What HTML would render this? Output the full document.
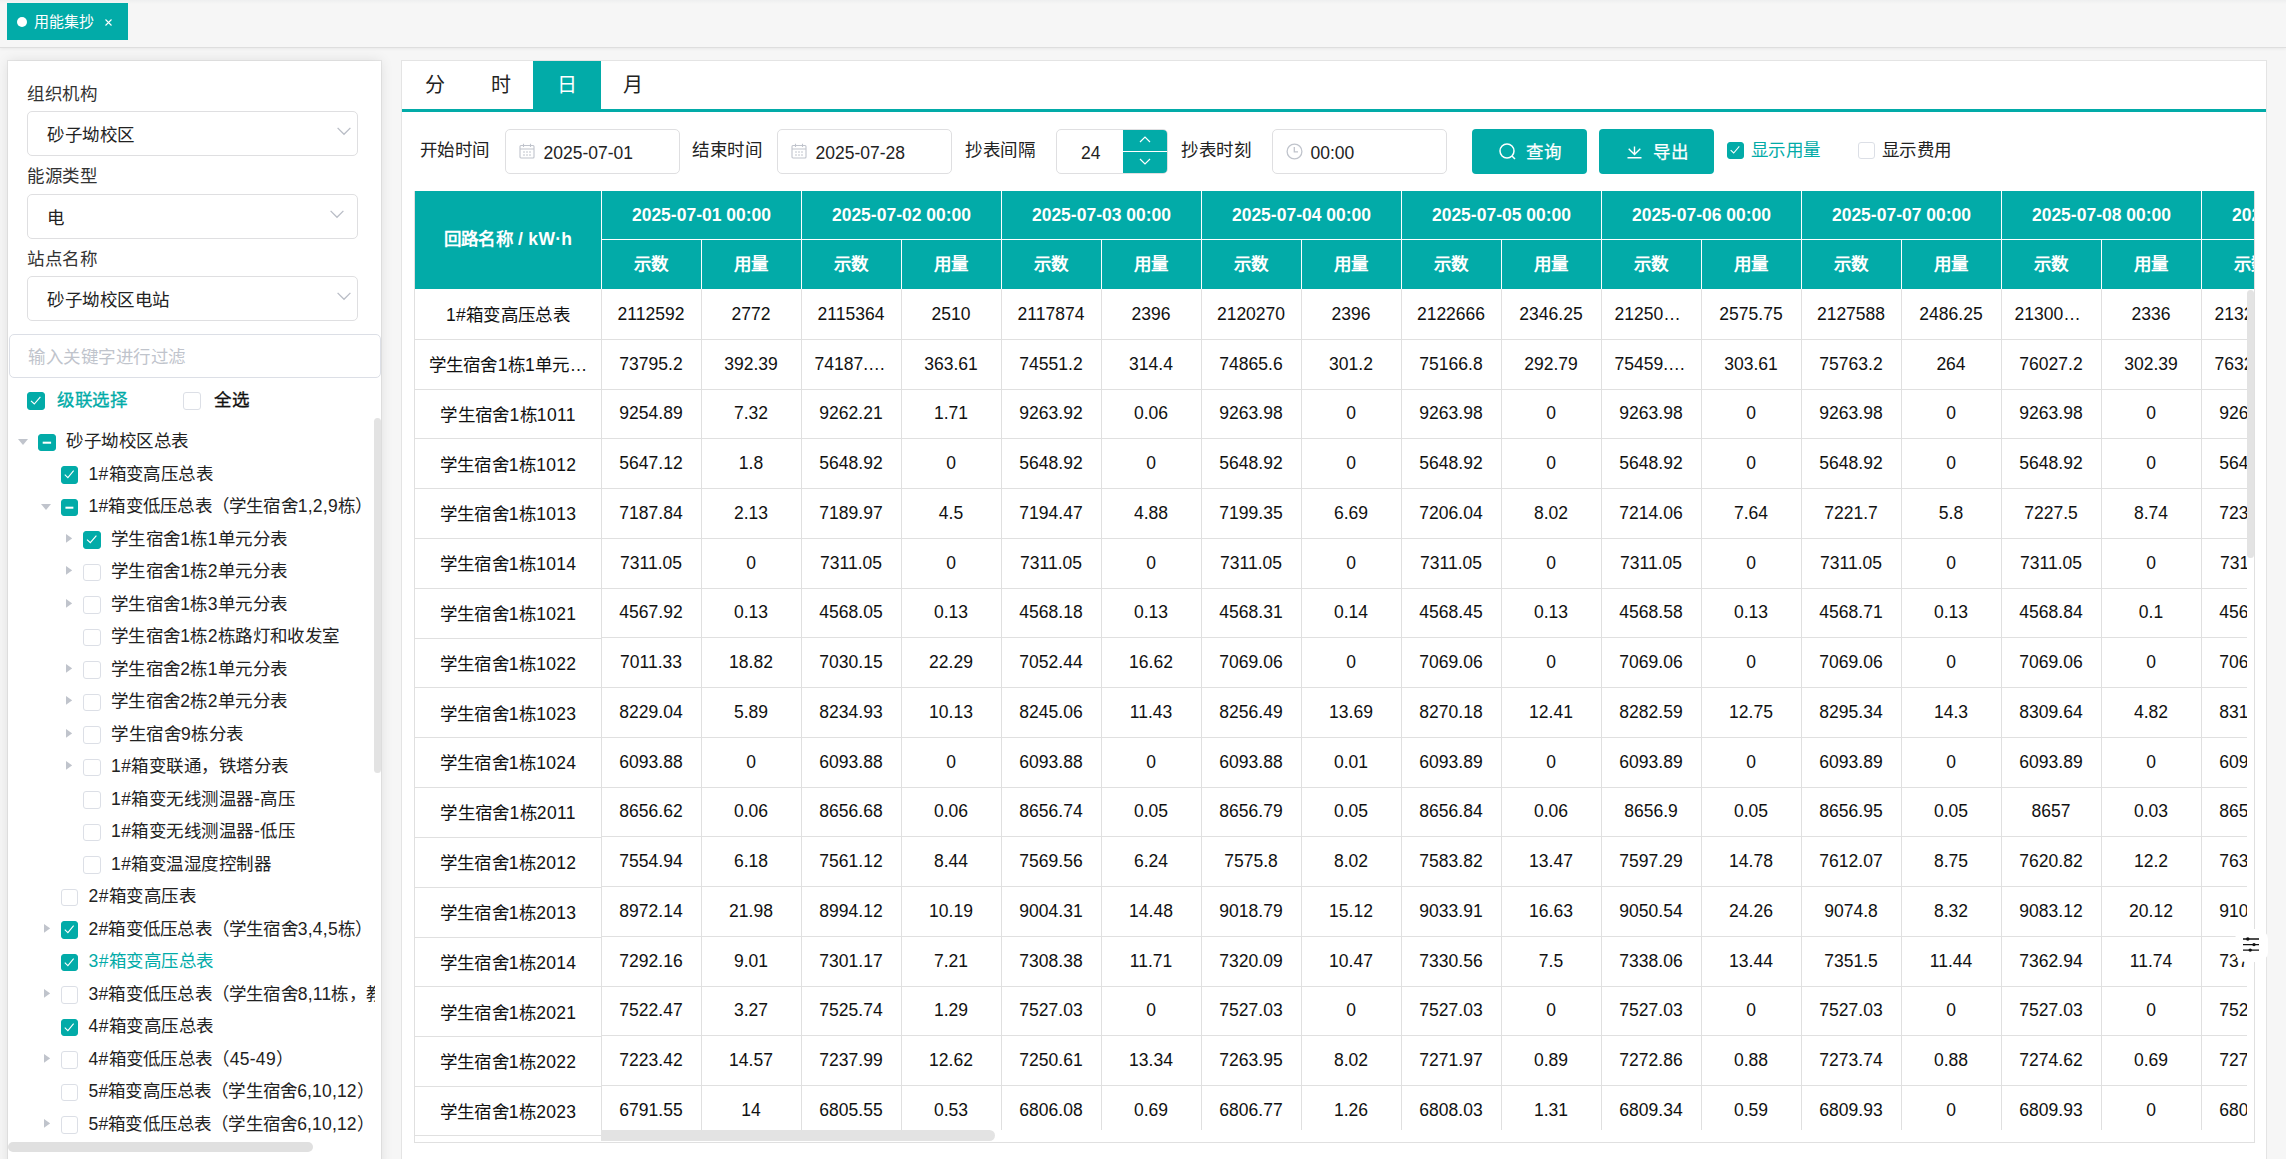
<!DOCTYPE html>
<html lang="zh-CN"><head><meta charset="utf-8"><title>用能集抄</title>
<style>
*{box-sizing:border-box;margin:0;padding:0}
html,body{width:2286px;height:1159px;overflow:hidden;background:#f6f6f6}
body{font-family:"Liberation Sans",sans-serif;font-size:17.5px;color:#222;position:relative}
.abs{position:absolute}
.t{position:absolute;white-space:nowrap;line-height:1;transform:translateY(-50%);margin-top:1.5px;letter-spacing:.5px}
.n{letter-spacing:0}
.cb{position:absolute;border:1px solid #dcdfe6;border-radius:3px;background:#fff;display:block}
.cb.on{background:#02aba8;border-color:#02aba8}
.cb svg{position:absolute;left:-1px;top:-1px;display:block}
/* top bar */
#topbar{left:0;top:0;width:2286px;height:48px;background:linear-gradient(#eeeff0 0,#f6f6f6 4px,#f6f6f6 100%);border-bottom:1px solid #dedede;box-shadow:0 1px 3px rgba(0,0,0,.06)}
#tag{left:7px;top:3px;width:121px;height:37px;background:#02aba8;color:#fff}
/* left panel */
#left{left:8px;top:61px;width:373px;height:1110px;background:#fff;box-shadow:0 0 0 1px rgba(0,0,0,.055),0 0 12px rgba(0,0,0,.10)}
.sel{position:absolute;left:27px;width:331px;height:45px;border:1px solid #dfdfe1;border-radius:5px;background:#fff}
/* right panel */
#right{left:401px;top:60px;width:1866px;height:1110px;background:#fff;border:1px solid #e4e4e4}
.inp{position:absolute;top:129px;height:45px;border:1px solid #dfdfe1;border-radius:5px;background:#fff}
.btn{position:absolute;top:129px;height:45px;border-radius:4px;background:#02aba8;color:#fff}
/* table */
#tbl{left:414px;top:191px;width:1841px;height:952px;border:1px solid #e0e0e0;border-top:none;overflow:hidden;background:#fff}
.hc{position:absolute;background:#02aba8;color:#fff;font-weight:bold;display:flex;align-items:center;justify-content:center;white-space:nowrap;overflow:hidden}
.c{position:absolute;height:50px;display:flex;align-items:center;justify-content:center;white-space:nowrap;color:#111;overflow:hidden}
.hz{position:relative}
.c0{letter-spacing:.3px}
.vl{position:absolute;width:1px;background:#e0e0e0}
.hl{position:absolute;height:1px;background:#e0e0e0}
</style></head><body>

<div id="topbar" class="abs"></div>
<div id="tag" class="abs"><span class="abs" style="left:10px;top:14px;width:10px;height:10px;border-radius:50%;background:#fff"></span><span class="t" style="left:27px;top:16.3px;font-size:15px;letter-spacing:0">用能集抄</span><svg class="abs" style="left:98px;top:16px" width="7" height="7" viewBox="0 0 7 7"><path d="M0.5 0.5L6.5 6.5M6.5 0.5L0.5 6.5" stroke="#fff" stroke-width="1.1" fill="none"/></svg></div>
<div id="left" class="abs"></div>
<span class="t" style="left:27.3px;top:93px;color:#333">组织机构</span>
<div class="sel" style="top:111px"></div>
<span class="t" style="left:47px;top:134.3px;color:#222">砂子坳校区</span>
<svg class="abs" style="left:336.5px;top:127.3px" width="14" height="9" viewBox="0 0 14 9"><path d="M0.6 0.9L7 7.3L13.4 0.9" fill="none" stroke="#b9bdc6" stroke-width="1.3"/></svg>
<span class="t" style="left:27.3px;top:175.5px;color:#333">能源类型</span>
<div class="sel" style="top:194px"></div>
<span class="t" style="left:47px;top:217.3px;color:#222">电</span>
<svg class="abs" style="left:330px;top:210.3px" width="14" height="9" viewBox="0 0 14 9"><path d="M0.6 0.9L7 7.3L13.4 0.9" fill="none" stroke="#b9bdc6" stroke-width="1.3"/></svg>
<span class="t" style="left:27.3px;top:258px;color:#333">站点名称</span>
<div class="sel" style="top:276px"></div>
<span class="t" style="left:47px;top:299.3px;color:#222">砂子坳校区电站</span>
<svg class="abs" style="left:336.5px;top:292.3px" width="14" height="9" viewBox="0 0 14 9"><path d="M0.6 0.9L7 7.3L13.4 0.9" fill="none" stroke="#b9bdc6" stroke-width="1.3"/></svg>
<div class="abs" style="left:9px;top:334px;width:372px;height:44px;border:1px solid #dcdfe6;border-radius:5px;background:#fff"></div>
<span class="t" style="left:28px;top:356.2px;color:#c0c4cc">输入关键字进行过滤</span>
<span class="cb on" style="left:27px;top:392px;width:18px;height:18px"><svg viewBox="0 0 18 18" width="18" height="18" preserveAspectRatio="none"><path d="M4.0 8.8 L7.3 12.0 L13.4 4.8" fill="none" stroke="#fff" stroke-width="1.15"/></svg></span>
<span class="t" style="left:57px;top:399.2px;-webkit-text-stroke:.3px #02aba8;color:#02aba8">级联选择</span>
<span class="cb" style="left:183px;top:392px;width:18px;height:18px"></span>
<span class="t" style="left:214px;top:399.2px;-webkit-text-stroke:.3px #111;color:#111">全选</span>
<div class="abs" style="left:8px;top:418px;width:367px;height:741px;overflow:hidden">
<svg class="abs" style="left:10.0px;top:21.0px" width="10" height="6" viewBox="0 0 10 6"><path d="M0 0H10L5 6Z" fill="#c0c4cc"/></svg>
<span class="cb on" style="left:30.0px;top:15.7px;width:18px;height:17.5px"><svg viewBox="0 0 18 18" width="18" height="17.5" preserveAspectRatio="none"><rect x="4.7" y="7.9" width="8.4" height="2.1" fill="#fff"/></svg></span>
<span class="t" style="left:58.0px;top:22.8px;color:#222">砂子坳校区总表</span>
<span class="cb on" style="left:53px;top:48.2px;width:17px;height:17.5px"><svg viewBox="0 0 18 18" width="17" height="17.5" preserveAspectRatio="none"><path d="M4.0 8.8 L7.3 12.0 L13.4 4.8" fill="none" stroke="#fff" stroke-width="1.15"/></svg></span>
<span class="t" style="left:80.5px;top:55.3px;color:#222;letter-spacing:0.38px">1#箱变高压总表</span>
<svg class="abs" style="left:32.5px;top:86.0px" width="10" height="6" viewBox="0 0 10 6"><path d="M0 0H10L5 6Z" fill="#c0c4cc"/></svg>
<span class="cb on" style="left:53px;top:80.7px;width:17px;height:17.5px"><svg viewBox="0 0 18 18" width="17" height="17.5" preserveAspectRatio="none"><rect x="4.7" y="7.9" width="8.4" height="2.1" fill="#fff"/></svg></span>
<span class="t" style="left:80.5px;top:87.8px;color:#222;letter-spacing:0.22px">1#箱变低压总表（学生宿舍1,2,9栋）</span>
<svg class="abs" style="left:58.0px;top:115.9px" width="6.3" height="8.8" viewBox="0 0 6.3 8.8"><path d="M0 0V8.8L6.3 4.4Z" fill="#c0c4cc"/></svg>
<span class="cb on" style="left:75.0px;top:113.2px;width:18px;height:17.5px"><svg viewBox="0 0 18 18" width="18" height="17.5" preserveAspectRatio="none"><path d="M4.0 8.8 L7.3 12.0 L13.4 4.8" fill="none" stroke="#fff" stroke-width="1.15"/></svg></span>
<span class="t" style="left:103.0px;top:120.3px;color:#222;letter-spacing:0.34px">学生宿舍1栋1单元分表</span>
<svg class="abs" style="left:58.0px;top:148.4px" width="6.3" height="8.8" viewBox="0 0 6.3 8.8"><path d="M0 0V8.8L6.3 4.4Z" fill="#c0c4cc"/></svg>
<span class="cb" style="left:75.0px;top:145.7px;width:18px;height:17.5px"></span>
<span class="t" style="left:103.0px;top:152.8px;color:#222;letter-spacing:0.34px">学生宿舍1栋2单元分表</span>
<svg class="abs" style="left:58.0px;top:180.9px" width="6.3" height="8.8" viewBox="0 0 6.3 8.8"><path d="M0 0V8.8L6.3 4.4Z" fill="#c0c4cc"/></svg>
<span class="cb" style="left:75.0px;top:178.2px;width:18px;height:17.5px"></span>
<span class="t" style="left:103.0px;top:185.3px;color:#222;letter-spacing:0.34px">学生宿舍1栋3单元分表</span>
<span class="cb" style="left:75.0px;top:210.7px;width:18px;height:17.5px"></span>
<span class="t" style="left:103.0px;top:217.8px;color:#222;letter-spacing:0.34px">学生宿舍1栋2栋路灯和收发室</span>
<svg class="abs" style="left:58.0px;top:245.9px" width="6.3" height="8.8" viewBox="0 0 6.3 8.8"><path d="M0 0V8.8L6.3 4.4Z" fill="#c0c4cc"/></svg>
<span class="cb" style="left:75.0px;top:243.2px;width:18px;height:17.5px"></span>
<span class="t" style="left:103.0px;top:250.3px;color:#222;letter-spacing:0.34px">学生宿舍2栋1单元分表</span>
<svg class="abs" style="left:58.0px;top:278.4px" width="6.3" height="8.8" viewBox="0 0 6.3 8.8"><path d="M0 0V8.8L6.3 4.4Z" fill="#c0c4cc"/></svg>
<span class="cb" style="left:75.0px;top:275.7px;width:18px;height:17.5px"></span>
<span class="t" style="left:103.0px;top:282.8px;color:#222;letter-spacing:0.34px">学生宿舍2栋2单元分表</span>
<svg class="abs" style="left:58.0px;top:310.9px" width="6.3" height="8.8" viewBox="0 0 6.3 8.8"><path d="M0 0V8.8L6.3 4.4Z" fill="#c0c4cc"/></svg>
<span class="cb" style="left:75.0px;top:308.2px;width:18px;height:17.5px"></span>
<span class="t" style="left:103.0px;top:315.3px;color:#222">学生宿舍9栋分表</span>
<svg class="abs" style="left:58.0px;top:343.4px" width="6.3" height="8.8" viewBox="0 0 6.3 8.8"><path d="M0 0V8.8L6.3 4.4Z" fill="#c0c4cc"/></svg>
<span class="cb" style="left:75.0px;top:340.7px;width:18px;height:17.5px"></span>
<span class="t" style="left:103.0px;top:347.8px;color:#222">1#箱变联通，铁塔分表</span>
<span class="cb" style="left:75.0px;top:373.2px;width:18px;height:17.5px"></span>
<span class="t" style="left:103.0px;top:380.3px;color:#222">1#箱变无线测温器-高压</span>
<span class="cb" style="left:75.0px;top:405.7px;width:18px;height:17.5px"></span>
<span class="t" style="left:103.0px;top:412.8px;color:#222">1#箱变无线测温器-低压</span>
<span class="cb" style="left:75.0px;top:438.2px;width:18px;height:17.5px"></span>
<span class="t" style="left:103.0px;top:445.3px;color:#222">1#箱变温湿度控制器</span>
<span class="cb" style="left:53px;top:470.7px;width:17px;height:17.5px"></span>
<span class="t" style="left:80.5px;top:477.8px;color:#222">2#箱变高压表</span>
<svg class="abs" style="left:35.5px;top:505.9px" width="6.3" height="8.8" viewBox="0 0 6.3 8.8"><path d="M0 0V8.8L6.3 4.4Z" fill="#c0c4cc"/></svg>
<span class="cb on" style="left:53px;top:503.2px;width:17px;height:17.5px"><svg viewBox="0 0 18 18" width="17" height="17.5" preserveAspectRatio="none"><path d="M4.0 8.8 L7.3 12.0 L13.4 4.8" fill="none" stroke="#fff" stroke-width="1.15"/></svg></span>
<span class="t" style="left:80.5px;top:510.3px;color:#222;letter-spacing:0.22px">2#箱变低压总表（学生宿舍3,4,5栋）</span>
<span class="cb on" style="left:53px;top:535.7px;width:17px;height:17.5px"><svg viewBox="0 0 18 18" width="17" height="17.5" preserveAspectRatio="none"><path d="M4.0 8.8 L7.3 12.0 L13.4 4.8" fill="none" stroke="#fff" stroke-width="1.15"/></svg></span>
<span class="t" style="left:80.5px;top:542.8px;color:#02aba8">3#箱变高压总表</span>
<svg class="abs" style="left:35.5px;top:570.9px" width="6.3" height="8.8" viewBox="0 0 6.3 8.8"><path d="M0 0V8.8L6.3 4.4Z" fill="#c0c4cc"/></svg>
<span class="cb" style="left:53px;top:568.2px;width:17px;height:17.5px"></span>
<span class="t" style="left:80.5px;top:575.3px;color:#222;letter-spacing:0.22px">3#箱变低压总表（学生宿舍8,11栋，教学楼）</span>
<span class="cb on" style="left:53px;top:600.7px;width:17px;height:17.5px"><svg viewBox="0 0 18 18" width="17" height="17.5" preserveAspectRatio="none"><path d="M4.0 8.8 L7.3 12.0 L13.4 4.8" fill="none" stroke="#fff" stroke-width="1.15"/></svg></span>
<span class="t" style="left:80.5px;top:607.8px;color:#222">4#箱变高压总表</span>
<svg class="abs" style="left:35.5px;top:635.9px" width="6.3" height="8.8" viewBox="0 0 6.3 8.8"><path d="M0 0V8.8L6.3 4.4Z" fill="#c0c4cc"/></svg>
<span class="cb" style="left:53px;top:633.2px;width:17px;height:17.5px"></span>
<span class="t" style="left:80.5px;top:640.3px;color:#222;letter-spacing:0.3px">4#箱变低压总表（45-49）</span>
<span class="cb" style="left:53px;top:665.7px;width:17px;height:17.5px"></span>
<span class="t" style="left:80.5px;top:672.8px;color:#222;letter-spacing:0.17px">5#箱变高压总表（学生宿舍6,10,12）</span>
<svg class="abs" style="left:35.5px;top:700.9px" width="6.3" height="8.8" viewBox="0 0 6.3 8.8"><path d="M0 0V8.8L6.3 4.4Z" fill="#c0c4cc"/></svg>
<span class="cb" style="left:53px;top:698.2px;width:17px;height:17.5px"></span>
<span class="t" style="left:80.5px;top:705.3px;color:#222;letter-spacing:0.17px">5#箱变低压总表（学生宿舍6,10,12）</span>
</div>
<div class="abs" style="left:374px;top:418px;width:7px;height:355px;border-radius:4px;background:#e3e3e3"></div>
<div class="abs" style="left:8px;top:1142px;width:305px;height:10px;border-radius:5px;background:#e0e0e0"></div>
<div id="right" class="abs"></div>
<div class="abs" style="left:402px;top:109px;width:1864px;height:3px;background:#02aba8"></div>
<div class="abs" style="left:533px;top:61px;width:68px;height:49px;background:#02aba8"></div>
<span class="t" style="left:424.5px;top:83.3px;font-size:20px;color:#222">分</span>
<span class="t" style="left:490.5px;top:83.3px;font-size:20px;color:#222">时</span>
<span class="t" style="left:557px;top:83.3px;font-size:20px;color:#fff">日</span>
<span class="t" style="left:622.5px;top:83.3px;font-size:20px;color:#222">月</span>
<span class="t" style="left:419.5px;top:149.6px;color:#222">开始时间</span>
<span class="t" style="left:692px;top:149.6px;color:#222">结束时间</span>
<span class="t" style="left:965px;top:149.6px;color:#222">抄表间隔</span>
<span class="t" style="left:1181px;top:149.6px;color:#222">抄表时刻</span>
<div class="inp" style="left:505px;width:175px"></div>
<svg class="abs" style="left:519px;top:143px" width="16" height="16" viewBox="0 0 16 16"><g fill="none" stroke="#c0c4cc" stroke-width="1.1"><rect x="1" y="2.5" width="14" height="12.5" rx="1"/><path d="M1 6H15M4.5 0.8V4M11.5 0.8V4"/><path d="M4 9H6M7 9H9M10 9H12M4 12H6M7 12H9M10 12H12" stroke-width="1"/></g></svg>
<span class="t n" style="left:543.5px;top:152.5px;color:#222">2025-07-01</span>
<div class="inp" style="left:777px;width:175px"></div>
<svg class="abs" style="left:791px;top:143px" width="16" height="16" viewBox="0 0 16 16"><g fill="none" stroke="#c0c4cc" stroke-width="1.1"><rect x="1" y="2.5" width="14" height="12.5" rx="1"/><path d="M1 6H15M4.5 0.8V4M11.5 0.8V4"/><path d="M4 9H6M7 9H9M10 9H12M4 12H6M7 12H9M10 12H12" stroke-width="1"/></g></svg>
<span class="t n" style="left:815.5px;top:152.5px;color:#222">2025-07-28</span>
<div class="inp" style="left:1056px;width:112px"></div>
<span class="t n" style="left:1081px;top:152.5px;color:#222">24</span>
<div class="abs" style="left:1123px;top:130px;width:44px;height:20.5px;background:#02aba8;border-radius:0 4px 0 0"></div>
<div class="abs" style="left:1123px;top:151.5px;width:44px;height:21px;background:#02aba8;border-radius:0 0 4px 0"></div>
<svg class="abs" style="left:1139px;top:136px" width="12" height="7" viewBox="0 0 12 7"><path d="M1 6L6 1L11 6" fill="none" stroke="#fff" stroke-width="1.2"/></svg>
<svg class="abs" style="left:1139px;top:158px" width="12" height="7" viewBox="0 0 12 7"><path d="M1 1L6 6L11 1" fill="none" stroke="#fff" stroke-width="1.2"/></svg>
<div class="inp" style="left:1272px;width:175px"></div>
<svg class="abs" style="left:1286px;top:142.5px" width="17" height="17" viewBox="0 0 17 17"><g fill="none" stroke="#c0c4cc" stroke-width="1.3"><circle cx="8.5" cy="8.5" r="7.4"/><path d="M8.3 4V8.8H12"/></g></svg>
<span class="t n" style="left:1310.5px;top:152.5px;color:#222">00:00</span>
<div class="btn" style="left:1472px;width:115px"></div>
<svg class="abs" style="left:1498px;top:142px" width="19" height="19" viewBox="0 0 19 19"><g fill="none" stroke="#fff" stroke-width="1.5"><circle cx="9" cy="9" r="7"/><path d="M14 14L17 17"/></g></svg>
<span class="t" style="left:1526px;top:151.5px;color:#fff;-webkit-text-stroke:.25px #fff">查询</span>
<div class="btn" style="left:1599px;width:115px"></div>
<svg class="abs" style="left:1626px;top:143px" width="17" height="17" viewBox="0 0 17 17"><g fill="none" stroke="#fff" stroke-width="1.4"><path d="M8.5 3.4V11.4M2.7 5.8L8.5 11.6L14.3 5.8M1.5 14.8H15.5"/></g></svg>
<span class="t" style="left:1653px;top:151.5px;color:#fff;-webkit-text-stroke:.25px #fff">导出</span>
<span class="cb on" style="left:1727px;top:142px;width:16.5px;height:16.5px"><svg viewBox="0 0 18 18" width="16.5" height="16.5" preserveAspectRatio="none"><path d="M4.0 8.8 L7.3 12.0 L13.4 4.8" fill="none" stroke="#fff" stroke-width="1.15"/></svg></span>
<span class="t" style="left:1750.5px;top:149.8px;color:#02aba8">显示用量</span>
<span class="cb" style="left:1858px;top:142px;width:16.5px;height:16.5px"></span>
<span class="t" style="left:1881.5px;top:149.8px;color:#222">显示费用</span>
<div id="tbl" class="abs">
<div class="hc" style="left:0;top:0;width:186px;height:98px"><span class="hz" style="top:-2.2px;letter-spacing:.3px">回路名称 / kW·h</span></div>
<div class="hc" style="left:187px;top:0;width:199px;height:48px"><span style="width:199px;text-align:center;flex:none">2025-07-01 00:00</span></div>
<div class="hc" style="left:187px;top:49px;width:99px;height:49px"><span class="hz" style="width:99px;text-align:center;flex:none;top:-2px;left:-.5px">示数</span></div>
<div class="hc" style="left:287px;top:49px;width:99px;height:49px"><span class="hz" style="width:99px;text-align:center;flex:none;top:-2px;left:-.5px">用量</span></div>
<div class="hc" style="left:387px;top:0;width:199px;height:48px"><span style="width:199px;text-align:center;flex:none">2025-07-02 00:00</span></div>
<div class="hc" style="left:387px;top:49px;width:99px;height:49px"><span class="hz" style="width:99px;text-align:center;flex:none;top:-2px;left:-.5px">示数</span></div>
<div class="hc" style="left:487px;top:49px;width:99px;height:49px"><span class="hz" style="width:99px;text-align:center;flex:none;top:-2px;left:-.5px">用量</span></div>
<div class="hc" style="left:587px;top:0;width:199px;height:48px"><span style="width:199px;text-align:center;flex:none">2025-07-03 00:00</span></div>
<div class="hc" style="left:587px;top:49px;width:99px;height:49px"><span class="hz" style="width:99px;text-align:center;flex:none;top:-2px;left:-.5px">示数</span></div>
<div class="hc" style="left:687px;top:49px;width:99px;height:49px"><span class="hz" style="width:99px;text-align:center;flex:none;top:-2px;left:-.5px">用量</span></div>
<div class="hc" style="left:787px;top:0;width:199px;height:48px"><span style="width:199px;text-align:center;flex:none">2025-07-04 00:00</span></div>
<div class="hc" style="left:787px;top:49px;width:99px;height:49px"><span class="hz" style="width:99px;text-align:center;flex:none;top:-2px;left:-.5px">示数</span></div>
<div class="hc" style="left:887px;top:49px;width:99px;height:49px"><span class="hz" style="width:99px;text-align:center;flex:none;top:-2px;left:-.5px">用量</span></div>
<div class="hc" style="left:987px;top:0;width:199px;height:48px"><span style="width:199px;text-align:center;flex:none">2025-07-05 00:00</span></div>
<div class="hc" style="left:987px;top:49px;width:99px;height:49px"><span class="hz" style="width:99px;text-align:center;flex:none;top:-2px;left:-.5px">示数</span></div>
<div class="hc" style="left:1087px;top:49px;width:99px;height:49px"><span class="hz" style="width:99px;text-align:center;flex:none;top:-2px;left:-.5px">用量</span></div>
<div class="hc" style="left:1187px;top:0;width:199px;height:48px"><span style="width:199px;text-align:center;flex:none">2025-07-06 00:00</span></div>
<div class="hc" style="left:1187px;top:49px;width:99px;height:49px"><span class="hz" style="width:99px;text-align:center;flex:none;top:-2px;left:-.5px">示数</span></div>
<div class="hc" style="left:1287px;top:49px;width:99px;height:49px"><span class="hz" style="width:99px;text-align:center;flex:none;top:-2px;left:-.5px">用量</span></div>
<div class="hc" style="left:1387px;top:0;width:199px;height:48px"><span style="width:199px;text-align:center;flex:none">2025-07-07 00:00</span></div>
<div class="hc" style="left:1387px;top:49px;width:99px;height:49px"><span class="hz" style="width:99px;text-align:center;flex:none;top:-2px;left:-.5px">示数</span></div>
<div class="hc" style="left:1487px;top:49px;width:99px;height:49px"><span class="hz" style="width:99px;text-align:center;flex:none;top:-2px;left:-.5px">用量</span></div>
<div class="hc" style="left:1587px;top:0;width:199px;height:48px"><span style="width:199px;text-align:center;flex:none">2025-07-08 00:00</span></div>
<div class="hc" style="left:1587px;top:49px;width:99px;height:49px"><span class="hz" style="width:99px;text-align:center;flex:none;top:-2px;left:-.5px">示数</span></div>
<div class="hc" style="left:1687px;top:49px;width:99px;height:49px"><span class="hz" style="width:99px;text-align:center;flex:none;top:-2px;left:-.5px">用量</span></div>
<div class="hc" style="left:1787px;top:0;width:199px;height:48px"><span style="width:199px;text-align:center;flex:none">2025-07-09 00:00</span></div>
<div class="hc" style="left:1787px;top:49px;width:99px;height:49px"><span class="hz" style="width:99px;text-align:center;flex:none;top:-2px;left:-.5px">示数</span></div>
<div class="hc" style="left:1887px;top:49px;width:99px;height:49px"><span class="hz" style="width:99px;text-align:center;flex:none;top:-2px;left:-.5px">用量</span></div>
<div class="abs" style="left:186px;top:0;width:1660px;height:98px;background:#e3f4f3;z-index:-1"></div>
<div class="abs" style="left:0;top:98px;width:1832px;height:853px;overflow:hidden">
<div class="c c0" style="left:0;top:-0.20px;width:186px;height:49.81px">1#箱变高压总表</div>
<div class="hl" style="left:0;top:49.81px;width:186px"></div>
<div class="c" style="left:186px;top:0.60px;width:100px;height:49.75px"><span style="width:100px;text-align:center;flex:none">2112592</span></div>
<div class="c" style="left:286px;top:0.60px;width:100px;height:49.75px"><span style="width:100px;text-align:center;flex:none">2772</span></div>
<div class="c" style="left:386px;top:0.60px;width:100px;height:49.75px"><span style="width:100px;text-align:center;flex:none">2115364</span></div>
<div class="c" style="left:486px;top:0.60px;width:100px;height:49.75px"><span style="width:100px;text-align:center;flex:none">2510</span></div>
<div class="c" style="left:586px;top:0.60px;width:100px;height:49.75px"><span style="width:100px;text-align:center;flex:none">2117874</span></div>
<div class="c" style="left:686px;top:0.60px;width:100px;height:49.75px"><span style="width:100px;text-align:center;flex:none">2396</span></div>
<div class="c" style="left:786px;top:0.60px;width:100px;height:49.75px"><span style="width:100px;text-align:center;flex:none">2120270</span></div>
<div class="c" style="left:886px;top:0.60px;width:100px;height:49.75px"><span style="width:100px;text-align:center;flex:none">2396</span></div>
<div class="c" style="left:986px;top:0.60px;width:100px;height:49.75px"><span style="width:100px;text-align:center;flex:none">2122666</span></div>
<div class="c" style="left:1086px;top:0.60px;width:100px;height:49.75px"><span style="width:100px;text-align:center;flex:none">2346.25</span></div>
<div class="c" style="left:1186px;top:0.60px;width:100px;height:49.75px"><span style="width:100px;text-align:left;padding-left:13.5px;flex:none">21250…</span></div>
<div class="c" style="left:1286px;top:0.60px;width:100px;height:49.75px"><span style="width:100px;text-align:center;flex:none">2575.75</span></div>
<div class="c" style="left:1386px;top:0.60px;width:100px;height:49.75px"><span style="width:100px;text-align:center;flex:none">2127588</span></div>
<div class="c" style="left:1486px;top:0.60px;width:100px;height:49.75px"><span style="width:100px;text-align:center;flex:none">2486.25</span></div>
<div class="c" style="left:1586px;top:0.60px;width:100px;height:49.75px"><span style="width:100px;text-align:left;padding-left:13.5px;flex:none">21300…</span></div>
<div class="c" style="left:1686px;top:0.60px;width:100px;height:49.75px"><span style="width:100px;text-align:center;flex:none">2336</span></div>
<div class="c" style="left:1786px;top:0.60px;width:100px;height:49.75px"><span style="width:100px;text-align:left;padding-left:13.5px;flex:none">21322…</span></div>
<div class="hl" style="left:186px;top:49.75px;width:1660px"></div>
<div class="c c0" style="left:0;top:49.61px;width:186px;height:49.81px">学生宿舍1栋1单元…</div>
<div class="hl" style="left:0;top:99.62px;width:186px"></div>
<div class="c" style="left:186px;top:50.35px;width:100px;height:49.75px"><span style="width:100px;text-align:center;flex:none">73795.2</span></div>
<div class="c" style="left:286px;top:50.35px;width:100px;height:49.75px"><span style="width:100px;text-align:center;flex:none">392.39</span></div>
<div class="c" style="left:386px;top:50.35px;width:100px;height:49.75px"><span style="width:100px;text-align:left;padding-left:13.5px;flex:none">74187.…</span></div>
<div class="c" style="left:486px;top:50.35px;width:100px;height:49.75px"><span style="width:100px;text-align:center;flex:none">363.61</span></div>
<div class="c" style="left:586px;top:50.35px;width:100px;height:49.75px"><span style="width:100px;text-align:center;flex:none">74551.2</span></div>
<div class="c" style="left:686px;top:50.35px;width:100px;height:49.75px"><span style="width:100px;text-align:center;flex:none">314.4</span></div>
<div class="c" style="left:786px;top:50.35px;width:100px;height:49.75px"><span style="width:100px;text-align:center;flex:none">74865.6</span></div>
<div class="c" style="left:886px;top:50.35px;width:100px;height:49.75px"><span style="width:100px;text-align:center;flex:none">301.2</span></div>
<div class="c" style="left:986px;top:50.35px;width:100px;height:49.75px"><span style="width:100px;text-align:center;flex:none">75166.8</span></div>
<div class="c" style="left:1086px;top:50.35px;width:100px;height:49.75px"><span style="width:100px;text-align:center;flex:none">292.79</span></div>
<div class="c" style="left:1186px;top:50.35px;width:100px;height:49.75px"><span style="width:100px;text-align:left;padding-left:13.5px;flex:none">75459.…</span></div>
<div class="c" style="left:1286px;top:50.35px;width:100px;height:49.75px"><span style="width:100px;text-align:center;flex:none">303.61</span></div>
<div class="c" style="left:1386px;top:50.35px;width:100px;height:49.75px"><span style="width:100px;text-align:center;flex:none">75763.2</span></div>
<div class="c" style="left:1486px;top:50.35px;width:100px;height:49.75px"><span style="width:100px;text-align:center;flex:none">264</span></div>
<div class="c" style="left:1586px;top:50.35px;width:100px;height:49.75px"><span style="width:100px;text-align:center;flex:none">76027.2</span></div>
<div class="c" style="left:1686px;top:50.35px;width:100px;height:49.75px"><span style="width:100px;text-align:center;flex:none">302.39</span></div>
<div class="c" style="left:1786px;top:50.35px;width:100px;height:49.75px"><span style="width:100px;text-align:center;flex:none">76329.59</span></div>
<div class="hl" style="left:186px;top:99.50px;width:1660px"></div>
<div class="c c0" style="left:0;top:99.42px;width:186px;height:49.81px">学生宿舍1栋1011</div>
<div class="hl" style="left:0;top:149.43px;width:186px"></div>
<div class="c" style="left:186px;top:100.10px;width:100px;height:49.75px"><span style="width:100px;text-align:center;flex:none">9254.89</span></div>
<div class="c" style="left:286px;top:100.10px;width:100px;height:49.75px"><span style="width:100px;text-align:center;flex:none">7.32</span></div>
<div class="c" style="left:386px;top:100.10px;width:100px;height:49.75px"><span style="width:100px;text-align:center;flex:none">9262.21</span></div>
<div class="c" style="left:486px;top:100.10px;width:100px;height:49.75px"><span style="width:100px;text-align:center;flex:none">1.71</span></div>
<div class="c" style="left:586px;top:100.10px;width:100px;height:49.75px"><span style="width:100px;text-align:center;flex:none">9263.92</span></div>
<div class="c" style="left:686px;top:100.10px;width:100px;height:49.75px"><span style="width:100px;text-align:center;flex:none">0.06</span></div>
<div class="c" style="left:786px;top:100.10px;width:100px;height:49.75px"><span style="width:100px;text-align:center;flex:none">9263.98</span></div>
<div class="c" style="left:886px;top:100.10px;width:100px;height:49.75px"><span style="width:100px;text-align:center;flex:none">0</span></div>
<div class="c" style="left:986px;top:100.10px;width:100px;height:49.75px"><span style="width:100px;text-align:center;flex:none">9263.98</span></div>
<div class="c" style="left:1086px;top:100.10px;width:100px;height:49.75px"><span style="width:100px;text-align:center;flex:none">0</span></div>
<div class="c" style="left:1186px;top:100.10px;width:100px;height:49.75px"><span style="width:100px;text-align:center;flex:none">9263.98</span></div>
<div class="c" style="left:1286px;top:100.10px;width:100px;height:49.75px"><span style="width:100px;text-align:center;flex:none">0</span></div>
<div class="c" style="left:1386px;top:100.10px;width:100px;height:49.75px"><span style="width:100px;text-align:center;flex:none">9263.98</span></div>
<div class="c" style="left:1486px;top:100.10px;width:100px;height:49.75px"><span style="width:100px;text-align:center;flex:none">0</span></div>
<div class="c" style="left:1586px;top:100.10px;width:100px;height:49.75px"><span style="width:100px;text-align:center;flex:none">9263.98</span></div>
<div class="c" style="left:1686px;top:100.10px;width:100px;height:49.75px"><span style="width:100px;text-align:center;flex:none">0</span></div>
<div class="c" style="left:1786px;top:100.10px;width:100px;height:49.75px"><span style="width:100px;text-align:center;flex:none">9263.98</span></div>
<div class="hl" style="left:186px;top:149.25px;width:1660px"></div>
<div class="c c0" style="left:0;top:149.23px;width:186px;height:49.81px">学生宿舍1栋1012</div>
<div class="hl" style="left:0;top:199.24px;width:186px"></div>
<div class="c" style="left:186px;top:149.85px;width:100px;height:49.75px"><span style="width:100px;text-align:center;flex:none">5647.12</span></div>
<div class="c" style="left:286px;top:149.85px;width:100px;height:49.75px"><span style="width:100px;text-align:center;flex:none">1.8</span></div>
<div class="c" style="left:386px;top:149.85px;width:100px;height:49.75px"><span style="width:100px;text-align:center;flex:none">5648.92</span></div>
<div class="c" style="left:486px;top:149.85px;width:100px;height:49.75px"><span style="width:100px;text-align:center;flex:none">0</span></div>
<div class="c" style="left:586px;top:149.85px;width:100px;height:49.75px"><span style="width:100px;text-align:center;flex:none">5648.92</span></div>
<div class="c" style="left:686px;top:149.85px;width:100px;height:49.75px"><span style="width:100px;text-align:center;flex:none">0</span></div>
<div class="c" style="left:786px;top:149.85px;width:100px;height:49.75px"><span style="width:100px;text-align:center;flex:none">5648.92</span></div>
<div class="c" style="left:886px;top:149.85px;width:100px;height:49.75px"><span style="width:100px;text-align:center;flex:none">0</span></div>
<div class="c" style="left:986px;top:149.85px;width:100px;height:49.75px"><span style="width:100px;text-align:center;flex:none">5648.92</span></div>
<div class="c" style="left:1086px;top:149.85px;width:100px;height:49.75px"><span style="width:100px;text-align:center;flex:none">0</span></div>
<div class="c" style="left:1186px;top:149.85px;width:100px;height:49.75px"><span style="width:100px;text-align:center;flex:none">5648.92</span></div>
<div class="c" style="left:1286px;top:149.85px;width:100px;height:49.75px"><span style="width:100px;text-align:center;flex:none">0</span></div>
<div class="c" style="left:1386px;top:149.85px;width:100px;height:49.75px"><span style="width:100px;text-align:center;flex:none">5648.92</span></div>
<div class="c" style="left:1486px;top:149.85px;width:100px;height:49.75px"><span style="width:100px;text-align:center;flex:none">0</span></div>
<div class="c" style="left:1586px;top:149.85px;width:100px;height:49.75px"><span style="width:100px;text-align:center;flex:none">5648.92</span></div>
<div class="c" style="left:1686px;top:149.85px;width:100px;height:49.75px"><span style="width:100px;text-align:center;flex:none">0</span></div>
<div class="c" style="left:1786px;top:149.85px;width:100px;height:49.75px"><span style="width:100px;text-align:center;flex:none">5648.92</span></div>
<div class="hl" style="left:186px;top:199.00px;width:1660px"></div>
<div class="c c0" style="left:0;top:199.04px;width:186px;height:49.81px">学生宿舍1栋1013</div>
<div class="hl" style="left:0;top:249.05px;width:186px"></div>
<div class="c" style="left:186px;top:199.60px;width:100px;height:49.75px"><span style="width:100px;text-align:center;flex:none">7187.84</span></div>
<div class="c" style="left:286px;top:199.60px;width:100px;height:49.75px"><span style="width:100px;text-align:center;flex:none">2.13</span></div>
<div class="c" style="left:386px;top:199.60px;width:100px;height:49.75px"><span style="width:100px;text-align:center;flex:none">7189.97</span></div>
<div class="c" style="left:486px;top:199.60px;width:100px;height:49.75px"><span style="width:100px;text-align:center;flex:none">4.5</span></div>
<div class="c" style="left:586px;top:199.60px;width:100px;height:49.75px"><span style="width:100px;text-align:center;flex:none">7194.47</span></div>
<div class="c" style="left:686px;top:199.60px;width:100px;height:49.75px"><span style="width:100px;text-align:center;flex:none">4.88</span></div>
<div class="c" style="left:786px;top:199.60px;width:100px;height:49.75px"><span style="width:100px;text-align:center;flex:none">7199.35</span></div>
<div class="c" style="left:886px;top:199.60px;width:100px;height:49.75px"><span style="width:100px;text-align:center;flex:none">6.69</span></div>
<div class="c" style="left:986px;top:199.60px;width:100px;height:49.75px"><span style="width:100px;text-align:center;flex:none">7206.04</span></div>
<div class="c" style="left:1086px;top:199.60px;width:100px;height:49.75px"><span style="width:100px;text-align:center;flex:none">8.02</span></div>
<div class="c" style="left:1186px;top:199.60px;width:100px;height:49.75px"><span style="width:100px;text-align:center;flex:none">7214.06</span></div>
<div class="c" style="left:1286px;top:199.60px;width:100px;height:49.75px"><span style="width:100px;text-align:center;flex:none">7.64</span></div>
<div class="c" style="left:1386px;top:199.60px;width:100px;height:49.75px"><span style="width:100px;text-align:center;flex:none">7221.7</span></div>
<div class="c" style="left:1486px;top:199.60px;width:100px;height:49.75px"><span style="width:100px;text-align:center;flex:none">5.8</span></div>
<div class="c" style="left:1586px;top:199.60px;width:100px;height:49.75px"><span style="width:100px;text-align:center;flex:none">7227.5</span></div>
<div class="c" style="left:1686px;top:199.60px;width:100px;height:49.75px"><span style="width:100px;text-align:center;flex:none">8.74</span></div>
<div class="c" style="left:1786px;top:199.60px;width:100px;height:49.75px"><span style="width:100px;text-align:center;flex:none">7236.24</span></div>
<div class="hl" style="left:186px;top:248.75px;width:1660px"></div>
<div class="c c0" style="left:0;top:248.85px;width:186px;height:49.81px">学生宿舍1栋1014</div>
<div class="hl" style="left:0;top:298.86px;width:186px"></div>
<div class="c" style="left:186px;top:249.35px;width:100px;height:49.75px"><span style="width:100px;text-align:center;flex:none">7311.05</span></div>
<div class="c" style="left:286px;top:249.35px;width:100px;height:49.75px"><span style="width:100px;text-align:center;flex:none">0</span></div>
<div class="c" style="left:386px;top:249.35px;width:100px;height:49.75px"><span style="width:100px;text-align:center;flex:none">7311.05</span></div>
<div class="c" style="left:486px;top:249.35px;width:100px;height:49.75px"><span style="width:100px;text-align:center;flex:none">0</span></div>
<div class="c" style="left:586px;top:249.35px;width:100px;height:49.75px"><span style="width:100px;text-align:center;flex:none">7311.05</span></div>
<div class="c" style="left:686px;top:249.35px;width:100px;height:49.75px"><span style="width:100px;text-align:center;flex:none">0</span></div>
<div class="c" style="left:786px;top:249.35px;width:100px;height:49.75px"><span style="width:100px;text-align:center;flex:none">7311.05</span></div>
<div class="c" style="left:886px;top:249.35px;width:100px;height:49.75px"><span style="width:100px;text-align:center;flex:none">0</span></div>
<div class="c" style="left:986px;top:249.35px;width:100px;height:49.75px"><span style="width:100px;text-align:center;flex:none">7311.05</span></div>
<div class="c" style="left:1086px;top:249.35px;width:100px;height:49.75px"><span style="width:100px;text-align:center;flex:none">0</span></div>
<div class="c" style="left:1186px;top:249.35px;width:100px;height:49.75px"><span style="width:100px;text-align:center;flex:none">7311.05</span></div>
<div class="c" style="left:1286px;top:249.35px;width:100px;height:49.75px"><span style="width:100px;text-align:center;flex:none">0</span></div>
<div class="c" style="left:1386px;top:249.35px;width:100px;height:49.75px"><span style="width:100px;text-align:center;flex:none">7311.05</span></div>
<div class="c" style="left:1486px;top:249.35px;width:100px;height:49.75px"><span style="width:100px;text-align:center;flex:none">0</span></div>
<div class="c" style="left:1586px;top:249.35px;width:100px;height:49.75px"><span style="width:100px;text-align:center;flex:none">7311.05</span></div>
<div class="c" style="left:1686px;top:249.35px;width:100px;height:49.75px"><span style="width:100px;text-align:center;flex:none">0</span></div>
<div class="c" style="left:1786px;top:249.35px;width:100px;height:49.75px"><span style="width:100px;text-align:center;flex:none">7311.05</span></div>
<div class="hl" style="left:186px;top:298.50px;width:1660px"></div>
<div class="c c0" style="left:0;top:298.66px;width:186px;height:49.81px">学生宿舍1栋1021</div>
<div class="hl" style="left:0;top:348.67px;width:186px"></div>
<div class="c" style="left:186px;top:299.10px;width:100px;height:49.75px"><span style="width:100px;text-align:center;flex:none">4567.92</span></div>
<div class="c" style="left:286px;top:299.10px;width:100px;height:49.75px"><span style="width:100px;text-align:center;flex:none">0.13</span></div>
<div class="c" style="left:386px;top:299.10px;width:100px;height:49.75px"><span style="width:100px;text-align:center;flex:none">4568.05</span></div>
<div class="c" style="left:486px;top:299.10px;width:100px;height:49.75px"><span style="width:100px;text-align:center;flex:none">0.13</span></div>
<div class="c" style="left:586px;top:299.10px;width:100px;height:49.75px"><span style="width:100px;text-align:center;flex:none">4568.18</span></div>
<div class="c" style="left:686px;top:299.10px;width:100px;height:49.75px"><span style="width:100px;text-align:center;flex:none">0.13</span></div>
<div class="c" style="left:786px;top:299.10px;width:100px;height:49.75px"><span style="width:100px;text-align:center;flex:none">4568.31</span></div>
<div class="c" style="left:886px;top:299.10px;width:100px;height:49.75px"><span style="width:100px;text-align:center;flex:none">0.14</span></div>
<div class="c" style="left:986px;top:299.10px;width:100px;height:49.75px"><span style="width:100px;text-align:center;flex:none">4568.45</span></div>
<div class="c" style="left:1086px;top:299.10px;width:100px;height:49.75px"><span style="width:100px;text-align:center;flex:none">0.13</span></div>
<div class="c" style="left:1186px;top:299.10px;width:100px;height:49.75px"><span style="width:100px;text-align:center;flex:none">4568.58</span></div>
<div class="c" style="left:1286px;top:299.10px;width:100px;height:49.75px"><span style="width:100px;text-align:center;flex:none">0.13</span></div>
<div class="c" style="left:1386px;top:299.10px;width:100px;height:49.75px"><span style="width:100px;text-align:center;flex:none">4568.71</span></div>
<div class="c" style="left:1486px;top:299.10px;width:100px;height:49.75px"><span style="width:100px;text-align:center;flex:none">0.13</span></div>
<div class="c" style="left:1586px;top:299.10px;width:100px;height:49.75px"><span style="width:100px;text-align:center;flex:none">4568.84</span></div>
<div class="c" style="left:1686px;top:299.10px;width:100px;height:49.75px"><span style="width:100px;text-align:center;flex:none">0.1</span></div>
<div class="c" style="left:1786px;top:299.10px;width:100px;height:49.75px"><span style="width:100px;text-align:center;flex:none">4568.94</span></div>
<div class="hl" style="left:186px;top:348.25px;width:1660px"></div>
<div class="c c0" style="left:0;top:348.47px;width:186px;height:49.81px">学生宿舍1栋1022</div>
<div class="hl" style="left:0;top:398.48px;width:186px"></div>
<div class="c" style="left:186px;top:348.85px;width:100px;height:49.75px"><span style="width:100px;text-align:center;flex:none">7011.33</span></div>
<div class="c" style="left:286px;top:348.85px;width:100px;height:49.75px"><span style="width:100px;text-align:center;flex:none">18.82</span></div>
<div class="c" style="left:386px;top:348.85px;width:100px;height:49.75px"><span style="width:100px;text-align:center;flex:none">7030.15</span></div>
<div class="c" style="left:486px;top:348.85px;width:100px;height:49.75px"><span style="width:100px;text-align:center;flex:none">22.29</span></div>
<div class="c" style="left:586px;top:348.85px;width:100px;height:49.75px"><span style="width:100px;text-align:center;flex:none">7052.44</span></div>
<div class="c" style="left:686px;top:348.85px;width:100px;height:49.75px"><span style="width:100px;text-align:center;flex:none">16.62</span></div>
<div class="c" style="left:786px;top:348.85px;width:100px;height:49.75px"><span style="width:100px;text-align:center;flex:none">7069.06</span></div>
<div class="c" style="left:886px;top:348.85px;width:100px;height:49.75px"><span style="width:100px;text-align:center;flex:none">0</span></div>
<div class="c" style="left:986px;top:348.85px;width:100px;height:49.75px"><span style="width:100px;text-align:center;flex:none">7069.06</span></div>
<div class="c" style="left:1086px;top:348.85px;width:100px;height:49.75px"><span style="width:100px;text-align:center;flex:none">0</span></div>
<div class="c" style="left:1186px;top:348.85px;width:100px;height:49.75px"><span style="width:100px;text-align:center;flex:none">7069.06</span></div>
<div class="c" style="left:1286px;top:348.85px;width:100px;height:49.75px"><span style="width:100px;text-align:center;flex:none">0</span></div>
<div class="c" style="left:1386px;top:348.85px;width:100px;height:49.75px"><span style="width:100px;text-align:center;flex:none">7069.06</span></div>
<div class="c" style="left:1486px;top:348.85px;width:100px;height:49.75px"><span style="width:100px;text-align:center;flex:none">0</span></div>
<div class="c" style="left:1586px;top:348.85px;width:100px;height:49.75px"><span style="width:100px;text-align:center;flex:none">7069.06</span></div>
<div class="c" style="left:1686px;top:348.85px;width:100px;height:49.75px"><span style="width:100px;text-align:center;flex:none">0</span></div>
<div class="c" style="left:1786px;top:348.85px;width:100px;height:49.75px"><span style="width:100px;text-align:center;flex:none">7069.06</span></div>
<div class="hl" style="left:186px;top:398.00px;width:1660px"></div>
<div class="c c0" style="left:0;top:398.28px;width:186px;height:49.81px">学生宿舍1栋1023</div>
<div class="hl" style="left:0;top:448.29px;width:186px"></div>
<div class="c" style="left:186px;top:398.60px;width:100px;height:49.75px"><span style="width:100px;text-align:center;flex:none">8229.04</span></div>
<div class="c" style="left:286px;top:398.60px;width:100px;height:49.75px"><span style="width:100px;text-align:center;flex:none">5.89</span></div>
<div class="c" style="left:386px;top:398.60px;width:100px;height:49.75px"><span style="width:100px;text-align:center;flex:none">8234.93</span></div>
<div class="c" style="left:486px;top:398.60px;width:100px;height:49.75px"><span style="width:100px;text-align:center;flex:none">10.13</span></div>
<div class="c" style="left:586px;top:398.60px;width:100px;height:49.75px"><span style="width:100px;text-align:center;flex:none">8245.06</span></div>
<div class="c" style="left:686px;top:398.60px;width:100px;height:49.75px"><span style="width:100px;text-align:center;flex:none">11.43</span></div>
<div class="c" style="left:786px;top:398.60px;width:100px;height:49.75px"><span style="width:100px;text-align:center;flex:none">8256.49</span></div>
<div class="c" style="left:886px;top:398.60px;width:100px;height:49.75px"><span style="width:100px;text-align:center;flex:none">13.69</span></div>
<div class="c" style="left:986px;top:398.60px;width:100px;height:49.75px"><span style="width:100px;text-align:center;flex:none">8270.18</span></div>
<div class="c" style="left:1086px;top:398.60px;width:100px;height:49.75px"><span style="width:100px;text-align:center;flex:none">12.41</span></div>
<div class="c" style="left:1186px;top:398.60px;width:100px;height:49.75px"><span style="width:100px;text-align:center;flex:none">8282.59</span></div>
<div class="c" style="left:1286px;top:398.60px;width:100px;height:49.75px"><span style="width:100px;text-align:center;flex:none">12.75</span></div>
<div class="c" style="left:1386px;top:398.60px;width:100px;height:49.75px"><span style="width:100px;text-align:center;flex:none">8295.34</span></div>
<div class="c" style="left:1486px;top:398.60px;width:100px;height:49.75px"><span style="width:100px;text-align:center;flex:none">14.3</span></div>
<div class="c" style="left:1586px;top:398.60px;width:100px;height:49.75px"><span style="width:100px;text-align:center;flex:none">8309.64</span></div>
<div class="c" style="left:1686px;top:398.60px;width:100px;height:49.75px"><span style="width:100px;text-align:center;flex:none">4.82</span></div>
<div class="c" style="left:1786px;top:398.60px;width:100px;height:49.75px"><span style="width:100px;text-align:center;flex:none">8314.46</span></div>
<div class="hl" style="left:186px;top:447.75px;width:1660px"></div>
<div class="c c0" style="left:0;top:448.09px;width:186px;height:49.81px">学生宿舍1栋1024</div>
<div class="hl" style="left:0;top:498.10px;width:186px"></div>
<div class="c" style="left:186px;top:448.35px;width:100px;height:49.75px"><span style="width:100px;text-align:center;flex:none">6093.88</span></div>
<div class="c" style="left:286px;top:448.35px;width:100px;height:49.75px"><span style="width:100px;text-align:center;flex:none">0</span></div>
<div class="c" style="left:386px;top:448.35px;width:100px;height:49.75px"><span style="width:100px;text-align:center;flex:none">6093.88</span></div>
<div class="c" style="left:486px;top:448.35px;width:100px;height:49.75px"><span style="width:100px;text-align:center;flex:none">0</span></div>
<div class="c" style="left:586px;top:448.35px;width:100px;height:49.75px"><span style="width:100px;text-align:center;flex:none">6093.88</span></div>
<div class="c" style="left:686px;top:448.35px;width:100px;height:49.75px"><span style="width:100px;text-align:center;flex:none">0</span></div>
<div class="c" style="left:786px;top:448.35px;width:100px;height:49.75px"><span style="width:100px;text-align:center;flex:none">6093.88</span></div>
<div class="c" style="left:886px;top:448.35px;width:100px;height:49.75px"><span style="width:100px;text-align:center;flex:none">0.01</span></div>
<div class="c" style="left:986px;top:448.35px;width:100px;height:49.75px"><span style="width:100px;text-align:center;flex:none">6093.89</span></div>
<div class="c" style="left:1086px;top:448.35px;width:100px;height:49.75px"><span style="width:100px;text-align:center;flex:none">0</span></div>
<div class="c" style="left:1186px;top:448.35px;width:100px;height:49.75px"><span style="width:100px;text-align:center;flex:none">6093.89</span></div>
<div class="c" style="left:1286px;top:448.35px;width:100px;height:49.75px"><span style="width:100px;text-align:center;flex:none">0</span></div>
<div class="c" style="left:1386px;top:448.35px;width:100px;height:49.75px"><span style="width:100px;text-align:center;flex:none">6093.89</span></div>
<div class="c" style="left:1486px;top:448.35px;width:100px;height:49.75px"><span style="width:100px;text-align:center;flex:none">0</span></div>
<div class="c" style="left:1586px;top:448.35px;width:100px;height:49.75px"><span style="width:100px;text-align:center;flex:none">6093.89</span></div>
<div class="c" style="left:1686px;top:448.35px;width:100px;height:49.75px"><span style="width:100px;text-align:center;flex:none">0</span></div>
<div class="c" style="left:1786px;top:448.35px;width:100px;height:49.75px"><span style="width:100px;text-align:center;flex:none">6093.89</span></div>
<div class="hl" style="left:186px;top:497.50px;width:1660px"></div>
<div class="c c0" style="left:0;top:497.90px;width:186px;height:49.81px">学生宿舍1栋2011</div>
<div class="hl" style="left:0;top:547.91px;width:186px"></div>
<div class="c" style="left:186px;top:498.10px;width:100px;height:49.75px"><span style="width:100px;text-align:center;flex:none">8656.62</span></div>
<div class="c" style="left:286px;top:498.10px;width:100px;height:49.75px"><span style="width:100px;text-align:center;flex:none">0.06</span></div>
<div class="c" style="left:386px;top:498.10px;width:100px;height:49.75px"><span style="width:100px;text-align:center;flex:none">8656.68</span></div>
<div class="c" style="left:486px;top:498.10px;width:100px;height:49.75px"><span style="width:100px;text-align:center;flex:none">0.06</span></div>
<div class="c" style="left:586px;top:498.10px;width:100px;height:49.75px"><span style="width:100px;text-align:center;flex:none">8656.74</span></div>
<div class="c" style="left:686px;top:498.10px;width:100px;height:49.75px"><span style="width:100px;text-align:center;flex:none">0.05</span></div>
<div class="c" style="left:786px;top:498.10px;width:100px;height:49.75px"><span style="width:100px;text-align:center;flex:none">8656.79</span></div>
<div class="c" style="left:886px;top:498.10px;width:100px;height:49.75px"><span style="width:100px;text-align:center;flex:none">0.05</span></div>
<div class="c" style="left:986px;top:498.10px;width:100px;height:49.75px"><span style="width:100px;text-align:center;flex:none">8656.84</span></div>
<div class="c" style="left:1086px;top:498.10px;width:100px;height:49.75px"><span style="width:100px;text-align:center;flex:none">0.06</span></div>
<div class="c" style="left:1186px;top:498.10px;width:100px;height:49.75px"><span style="width:100px;text-align:center;flex:none">8656.9</span></div>
<div class="c" style="left:1286px;top:498.10px;width:100px;height:49.75px"><span style="width:100px;text-align:center;flex:none">0.05</span></div>
<div class="c" style="left:1386px;top:498.10px;width:100px;height:49.75px"><span style="width:100px;text-align:center;flex:none">8656.95</span></div>
<div class="c" style="left:1486px;top:498.10px;width:100px;height:49.75px"><span style="width:100px;text-align:center;flex:none">0.05</span></div>
<div class="c" style="left:1586px;top:498.10px;width:100px;height:49.75px"><span style="width:100px;text-align:center;flex:none">8657</span></div>
<div class="c" style="left:1686px;top:498.10px;width:100px;height:49.75px"><span style="width:100px;text-align:center;flex:none">0.03</span></div>
<div class="c" style="left:1786px;top:498.10px;width:100px;height:49.75px"><span style="width:100px;text-align:center;flex:none">8657.03</span></div>
<div class="hl" style="left:186px;top:547.25px;width:1660px"></div>
<div class="c c0" style="left:0;top:547.71px;width:186px;height:49.81px">学生宿舍1栋2012</div>
<div class="hl" style="left:0;top:597.72px;width:186px"></div>
<div class="c" style="left:186px;top:547.85px;width:100px;height:49.75px"><span style="width:100px;text-align:center;flex:none">7554.94</span></div>
<div class="c" style="left:286px;top:547.85px;width:100px;height:49.75px"><span style="width:100px;text-align:center;flex:none">6.18</span></div>
<div class="c" style="left:386px;top:547.85px;width:100px;height:49.75px"><span style="width:100px;text-align:center;flex:none">7561.12</span></div>
<div class="c" style="left:486px;top:547.85px;width:100px;height:49.75px"><span style="width:100px;text-align:center;flex:none">8.44</span></div>
<div class="c" style="left:586px;top:547.85px;width:100px;height:49.75px"><span style="width:100px;text-align:center;flex:none">7569.56</span></div>
<div class="c" style="left:686px;top:547.85px;width:100px;height:49.75px"><span style="width:100px;text-align:center;flex:none">6.24</span></div>
<div class="c" style="left:786px;top:547.85px;width:100px;height:49.75px"><span style="width:100px;text-align:center;flex:none">7575.8</span></div>
<div class="c" style="left:886px;top:547.85px;width:100px;height:49.75px"><span style="width:100px;text-align:center;flex:none">8.02</span></div>
<div class="c" style="left:986px;top:547.85px;width:100px;height:49.75px"><span style="width:100px;text-align:center;flex:none">7583.82</span></div>
<div class="c" style="left:1086px;top:547.85px;width:100px;height:49.75px"><span style="width:100px;text-align:center;flex:none">13.47</span></div>
<div class="c" style="left:1186px;top:547.85px;width:100px;height:49.75px"><span style="width:100px;text-align:center;flex:none">7597.29</span></div>
<div class="c" style="left:1286px;top:547.85px;width:100px;height:49.75px"><span style="width:100px;text-align:center;flex:none">14.78</span></div>
<div class="c" style="left:1386px;top:547.85px;width:100px;height:49.75px"><span style="width:100px;text-align:center;flex:none">7612.07</span></div>
<div class="c" style="left:1486px;top:547.85px;width:100px;height:49.75px"><span style="width:100px;text-align:center;flex:none">8.75</span></div>
<div class="c" style="left:1586px;top:547.85px;width:100px;height:49.75px"><span style="width:100px;text-align:center;flex:none">7620.82</span></div>
<div class="c" style="left:1686px;top:547.85px;width:100px;height:49.75px"><span style="width:100px;text-align:center;flex:none">12.2</span></div>
<div class="c" style="left:1786px;top:547.85px;width:100px;height:49.75px"><span style="width:100px;text-align:center;flex:none">7633.02</span></div>
<div class="hl" style="left:186px;top:597.00px;width:1660px"></div>
<div class="c c0" style="left:0;top:597.52px;width:186px;height:49.81px">学生宿舍1栋2013</div>
<div class="hl" style="left:0;top:647.53px;width:186px"></div>
<div class="c" style="left:186px;top:597.60px;width:100px;height:49.75px"><span style="width:100px;text-align:center;flex:none">8972.14</span></div>
<div class="c" style="left:286px;top:597.60px;width:100px;height:49.75px"><span style="width:100px;text-align:center;flex:none">21.98</span></div>
<div class="c" style="left:386px;top:597.60px;width:100px;height:49.75px"><span style="width:100px;text-align:center;flex:none">8994.12</span></div>
<div class="c" style="left:486px;top:597.60px;width:100px;height:49.75px"><span style="width:100px;text-align:center;flex:none">10.19</span></div>
<div class="c" style="left:586px;top:597.60px;width:100px;height:49.75px"><span style="width:100px;text-align:center;flex:none">9004.31</span></div>
<div class="c" style="left:686px;top:597.60px;width:100px;height:49.75px"><span style="width:100px;text-align:center;flex:none">14.48</span></div>
<div class="c" style="left:786px;top:597.60px;width:100px;height:49.75px"><span style="width:100px;text-align:center;flex:none">9018.79</span></div>
<div class="c" style="left:886px;top:597.60px;width:100px;height:49.75px"><span style="width:100px;text-align:center;flex:none">15.12</span></div>
<div class="c" style="left:986px;top:597.60px;width:100px;height:49.75px"><span style="width:100px;text-align:center;flex:none">9033.91</span></div>
<div class="c" style="left:1086px;top:597.60px;width:100px;height:49.75px"><span style="width:100px;text-align:center;flex:none">16.63</span></div>
<div class="c" style="left:1186px;top:597.60px;width:100px;height:49.75px"><span style="width:100px;text-align:center;flex:none">9050.54</span></div>
<div class="c" style="left:1286px;top:597.60px;width:100px;height:49.75px"><span style="width:100px;text-align:center;flex:none">24.26</span></div>
<div class="c" style="left:1386px;top:597.60px;width:100px;height:49.75px"><span style="width:100px;text-align:center;flex:none">9074.8</span></div>
<div class="c" style="left:1486px;top:597.60px;width:100px;height:49.75px"><span style="width:100px;text-align:center;flex:none">8.32</span></div>
<div class="c" style="left:1586px;top:597.60px;width:100px;height:49.75px"><span style="width:100px;text-align:center;flex:none">9083.12</span></div>
<div class="c" style="left:1686px;top:597.60px;width:100px;height:49.75px"><span style="width:100px;text-align:center;flex:none">20.12</span></div>
<div class="c" style="left:1786px;top:597.60px;width:100px;height:49.75px"><span style="width:100px;text-align:center;flex:none">9103.24</span></div>
<div class="hl" style="left:186px;top:646.75px;width:1660px"></div>
<div class="c c0" style="left:0;top:647.33px;width:186px;height:49.81px">学生宿舍1栋2014</div>
<div class="hl" style="left:0;top:697.34px;width:186px"></div>
<div class="c" style="left:186px;top:647.35px;width:100px;height:49.75px"><span style="width:100px;text-align:center;flex:none">7292.16</span></div>
<div class="c" style="left:286px;top:647.35px;width:100px;height:49.75px"><span style="width:100px;text-align:center;flex:none">9.01</span></div>
<div class="c" style="left:386px;top:647.35px;width:100px;height:49.75px"><span style="width:100px;text-align:center;flex:none">7301.17</span></div>
<div class="c" style="left:486px;top:647.35px;width:100px;height:49.75px"><span style="width:100px;text-align:center;flex:none">7.21</span></div>
<div class="c" style="left:586px;top:647.35px;width:100px;height:49.75px"><span style="width:100px;text-align:center;flex:none">7308.38</span></div>
<div class="c" style="left:686px;top:647.35px;width:100px;height:49.75px"><span style="width:100px;text-align:center;flex:none">11.71</span></div>
<div class="c" style="left:786px;top:647.35px;width:100px;height:49.75px"><span style="width:100px;text-align:center;flex:none">7320.09</span></div>
<div class="c" style="left:886px;top:647.35px;width:100px;height:49.75px"><span style="width:100px;text-align:center;flex:none">10.47</span></div>
<div class="c" style="left:986px;top:647.35px;width:100px;height:49.75px"><span style="width:100px;text-align:center;flex:none">7330.56</span></div>
<div class="c" style="left:1086px;top:647.35px;width:100px;height:49.75px"><span style="width:100px;text-align:center;flex:none">7.5</span></div>
<div class="c" style="left:1186px;top:647.35px;width:100px;height:49.75px"><span style="width:100px;text-align:center;flex:none">7338.06</span></div>
<div class="c" style="left:1286px;top:647.35px;width:100px;height:49.75px"><span style="width:100px;text-align:center;flex:none">13.44</span></div>
<div class="c" style="left:1386px;top:647.35px;width:100px;height:49.75px"><span style="width:100px;text-align:center;flex:none">7351.5</span></div>
<div class="c" style="left:1486px;top:647.35px;width:100px;height:49.75px"><span style="width:100px;text-align:center;flex:none">11.44</span></div>
<div class="c" style="left:1586px;top:647.35px;width:100px;height:49.75px"><span style="width:100px;text-align:center;flex:none">7362.94</span></div>
<div class="c" style="left:1686px;top:647.35px;width:100px;height:49.75px"><span style="width:100px;text-align:center;flex:none">11.74</span></div>
<div class="c" style="left:1786px;top:647.35px;width:100px;height:49.75px"><span style="width:100px;text-align:center;flex:none">7374.68</span></div>
<div class="hl" style="left:186px;top:696.50px;width:1660px"></div>
<div class="c c0" style="left:0;top:697.14px;width:186px;height:49.81px">学生宿舍1栋2021</div>
<div class="hl" style="left:0;top:747.15px;width:186px"></div>
<div class="c" style="left:186px;top:697.10px;width:100px;height:49.75px"><span style="width:100px;text-align:center;flex:none">7522.47</span></div>
<div class="c" style="left:286px;top:697.10px;width:100px;height:49.75px"><span style="width:100px;text-align:center;flex:none">3.27</span></div>
<div class="c" style="left:386px;top:697.10px;width:100px;height:49.75px"><span style="width:100px;text-align:center;flex:none">7525.74</span></div>
<div class="c" style="left:486px;top:697.10px;width:100px;height:49.75px"><span style="width:100px;text-align:center;flex:none">1.29</span></div>
<div class="c" style="left:586px;top:697.10px;width:100px;height:49.75px"><span style="width:100px;text-align:center;flex:none">7527.03</span></div>
<div class="c" style="left:686px;top:697.10px;width:100px;height:49.75px"><span style="width:100px;text-align:center;flex:none">0</span></div>
<div class="c" style="left:786px;top:697.10px;width:100px;height:49.75px"><span style="width:100px;text-align:center;flex:none">7527.03</span></div>
<div class="c" style="left:886px;top:697.10px;width:100px;height:49.75px"><span style="width:100px;text-align:center;flex:none">0</span></div>
<div class="c" style="left:986px;top:697.10px;width:100px;height:49.75px"><span style="width:100px;text-align:center;flex:none">7527.03</span></div>
<div class="c" style="left:1086px;top:697.10px;width:100px;height:49.75px"><span style="width:100px;text-align:center;flex:none">0</span></div>
<div class="c" style="left:1186px;top:697.10px;width:100px;height:49.75px"><span style="width:100px;text-align:center;flex:none">7527.03</span></div>
<div class="c" style="left:1286px;top:697.10px;width:100px;height:49.75px"><span style="width:100px;text-align:center;flex:none">0</span></div>
<div class="c" style="left:1386px;top:697.10px;width:100px;height:49.75px"><span style="width:100px;text-align:center;flex:none">7527.03</span></div>
<div class="c" style="left:1486px;top:697.10px;width:100px;height:49.75px"><span style="width:100px;text-align:center;flex:none">0</span></div>
<div class="c" style="left:1586px;top:697.10px;width:100px;height:49.75px"><span style="width:100px;text-align:center;flex:none">7527.03</span></div>
<div class="c" style="left:1686px;top:697.10px;width:100px;height:49.75px"><span style="width:100px;text-align:center;flex:none">0</span></div>
<div class="c" style="left:1786px;top:697.10px;width:100px;height:49.75px"><span style="width:100px;text-align:center;flex:none">7527.03</span></div>
<div class="hl" style="left:186px;top:746.25px;width:1660px"></div>
<div class="c c0" style="left:0;top:746.95px;width:186px;height:49.81px">学生宿舍1栋2022</div>
<div class="hl" style="left:0;top:796.96px;width:186px"></div>
<div class="c" style="left:186px;top:746.85px;width:100px;height:49.75px"><span style="width:100px;text-align:center;flex:none">7223.42</span></div>
<div class="c" style="left:286px;top:746.85px;width:100px;height:49.75px"><span style="width:100px;text-align:center;flex:none">14.57</span></div>
<div class="c" style="left:386px;top:746.85px;width:100px;height:49.75px"><span style="width:100px;text-align:center;flex:none">7237.99</span></div>
<div class="c" style="left:486px;top:746.85px;width:100px;height:49.75px"><span style="width:100px;text-align:center;flex:none">12.62</span></div>
<div class="c" style="left:586px;top:746.85px;width:100px;height:49.75px"><span style="width:100px;text-align:center;flex:none">7250.61</span></div>
<div class="c" style="left:686px;top:746.85px;width:100px;height:49.75px"><span style="width:100px;text-align:center;flex:none">13.34</span></div>
<div class="c" style="left:786px;top:746.85px;width:100px;height:49.75px"><span style="width:100px;text-align:center;flex:none">7263.95</span></div>
<div class="c" style="left:886px;top:746.85px;width:100px;height:49.75px"><span style="width:100px;text-align:center;flex:none">8.02</span></div>
<div class="c" style="left:986px;top:746.85px;width:100px;height:49.75px"><span style="width:100px;text-align:center;flex:none">7271.97</span></div>
<div class="c" style="left:1086px;top:746.85px;width:100px;height:49.75px"><span style="width:100px;text-align:center;flex:none">0.89</span></div>
<div class="c" style="left:1186px;top:746.85px;width:100px;height:49.75px"><span style="width:100px;text-align:center;flex:none">7272.86</span></div>
<div class="c" style="left:1286px;top:746.85px;width:100px;height:49.75px"><span style="width:100px;text-align:center;flex:none">0.88</span></div>
<div class="c" style="left:1386px;top:746.85px;width:100px;height:49.75px"><span style="width:100px;text-align:center;flex:none">7273.74</span></div>
<div class="c" style="left:1486px;top:746.85px;width:100px;height:49.75px"><span style="width:100px;text-align:center;flex:none">0.88</span></div>
<div class="c" style="left:1586px;top:746.85px;width:100px;height:49.75px"><span style="width:100px;text-align:center;flex:none">7274.62</span></div>
<div class="c" style="left:1686px;top:746.85px;width:100px;height:49.75px"><span style="width:100px;text-align:center;flex:none">0.69</span></div>
<div class="c" style="left:1786px;top:746.85px;width:100px;height:49.75px"><span style="width:100px;text-align:center;flex:none">7275.31</span></div>
<div class="hl" style="left:186px;top:796.00px;width:1660px"></div>
<div class="c c0" style="left:0;top:796.76px;width:186px;height:49.81px">学生宿舍1栋2023</div>
<div class="hl" style="left:0;top:846.00px;width:186px"></div>
<div class="c" style="left:186px;top:796.60px;width:100px;height:49.75px"><span style="width:100px;text-align:center;flex:none">6791.55</span></div>
<div class="c" style="left:286px;top:796.60px;width:100px;height:49.75px"><span style="width:100px;text-align:center;flex:none">14</span></div>
<div class="c" style="left:386px;top:796.60px;width:100px;height:49.75px"><span style="width:100px;text-align:center;flex:none">6805.55</span></div>
<div class="c" style="left:486px;top:796.60px;width:100px;height:49.75px"><span style="width:100px;text-align:center;flex:none">0.53</span></div>
<div class="c" style="left:586px;top:796.60px;width:100px;height:49.75px"><span style="width:100px;text-align:center;flex:none">6806.08</span></div>
<div class="c" style="left:686px;top:796.60px;width:100px;height:49.75px"><span style="width:100px;text-align:center;flex:none">0.69</span></div>
<div class="c" style="left:786px;top:796.60px;width:100px;height:49.75px"><span style="width:100px;text-align:center;flex:none">6806.77</span></div>
<div class="c" style="left:886px;top:796.60px;width:100px;height:49.75px"><span style="width:100px;text-align:center;flex:none">1.26</span></div>
<div class="c" style="left:986px;top:796.60px;width:100px;height:49.75px"><span style="width:100px;text-align:center;flex:none">6808.03</span></div>
<div class="c" style="left:1086px;top:796.60px;width:100px;height:49.75px"><span style="width:100px;text-align:center;flex:none">1.31</span></div>
<div class="c" style="left:1186px;top:796.60px;width:100px;height:49.75px"><span style="width:100px;text-align:center;flex:none">6809.34</span></div>
<div class="c" style="left:1286px;top:796.60px;width:100px;height:49.75px"><span style="width:100px;text-align:center;flex:none">0.59</span></div>
<div class="c" style="left:1386px;top:796.60px;width:100px;height:49.75px"><span style="width:100px;text-align:center;flex:none">6809.93</span></div>
<div class="c" style="left:1486px;top:796.60px;width:100px;height:49.75px"><span style="width:100px;text-align:center;flex:none">0</span></div>
<div class="c" style="left:1586px;top:796.60px;width:100px;height:49.75px"><span style="width:100px;text-align:center;flex:none">6809.93</span></div>
<div class="c" style="left:1686px;top:796.60px;width:100px;height:49.75px"><span style="width:100px;text-align:center;flex:none">0</span></div>
<div class="c" style="left:1786px;top:796.60px;width:100px;height:49.75px"><span style="width:100px;text-align:center;flex:none">6809.93</span></div>
<div class="hl" style="left:186px;top:845.75px;width:1660px"></div>
<div class="vl" style="left:186px;top:0;height:853px"></div>
<div class="vl" style="left:286px;top:0;height:853px"></div>
<div class="vl" style="left:386px;top:0;height:853px"></div>
<div class="vl" style="left:486px;top:0;height:853px"></div>
<div class="vl" style="left:586px;top:0;height:853px"></div>
<div class="vl" style="left:686px;top:0;height:853px"></div>
<div class="vl" style="left:786px;top:0;height:853px"></div>
<div class="vl" style="left:886px;top:0;height:853px"></div>
<div class="vl" style="left:986px;top:0;height:853px"></div>
<div class="vl" style="left:1086px;top:0;height:853px"></div>
<div class="vl" style="left:1186px;top:0;height:853px"></div>
<div class="vl" style="left:1286px;top:0;height:853px"></div>
<div class="vl" style="left:1386px;top:0;height:853px"></div>
<div class="vl" style="left:1486px;top:0;height:853px"></div>
<div class="vl" style="left:1586px;top:0;height:853px"></div>
<div class="vl" style="left:1686px;top:0;height:853px"></div>
<div class="vl" style="left:1786px;top:0;height:853px"></div>
<div class="vl" style="left:1886px;top:0;height:853px"></div>
</div>
</div>
<div class="abs" style="left:2247px;top:289.5px;width:7px;height:268px;background:#e3e3e3;border-radius:3.5px"></div>
<div class="abs" style="left:601px;top:1130px;width:1653px;height:12px;background:#fff"></div>
<div class="abs" style="left:601px;top:1130px;width:394px;height:11px;background:#e3e3e3;border-radius:0 6px 6px 0"></div>
<div class="abs" style="left:2235px;top:929px;width:33px;height:33px;background:#fff;border-radius:10px"></div>
<svg class="abs" style="left:2243px;top:936px" width="16" height="17" viewBox="0 0 16 17"><g stroke="#111" stroke-width="1.3" fill="none"><path d="M0 3H16M0 8.6H16M0 14.1H16"/></g><g fill="#111"><circle cx="4.8" cy="3" r="1.7"/><circle cx="11" cy="8.6" r="1.7"/><circle cx="7.2" cy="14.1" r="1.7"/></g></svg>
</body></html>
